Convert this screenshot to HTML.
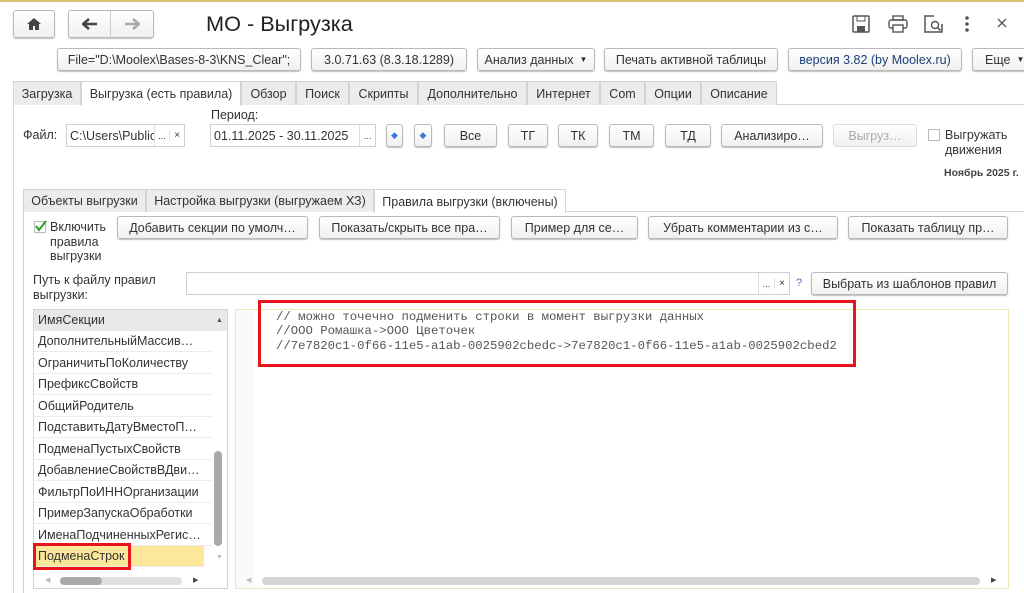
<!DOCTYPE html>
<html><head><meta charset="utf-8"><style>
*{box-sizing:border-box}
body{margin:0;width:1024px;height:593px;overflow:hidden;background:#fff;font-family:"Liberation Sans",sans-serif;font-size:12.5px;color:#333;position:relative}
.a{position:absolute}
.btn{position:absolute;border:1px solid #b9b9b9;border-radius:3px;background:linear-gradient(#fff,#f0f0f0);box-shadow:0 1px 1px rgba(0,0,0,.25);display:flex;align-items:center;justify-content:center;font-size:12.5px;color:#333;white-space:nowrap;overflow:hidden}
.tab{position:absolute;top:81px;height:24px;background:#ececec;border:1px solid #d4d4d4;border-bottom:none;display:flex;align-items:center;justify-content:center;font-size:12.5px}
.inp{position:absolute;border:1px solid #cfcfcf;background:#fff;font-size:12.5px;display:flex;align-items:center;padding-left:3px;overflow:hidden;white-space:nowrap}
.row{position:absolute;left:34px;width:178px;height:21px;border-bottom:1px solid #ececec;padding-left:4px;line-height:21px;font-size:12.5px;white-space:nowrap}
.mono{position:absolute;left:276px;font-family:"Liberation Mono",monospace;font-size:12.3px;color:#555;white-space:pre}
</style></head><body>
<div class="a" style="left:0;top:0;width:1024px;height:2px;background:#d8c37a"></div>
<div class="btn" style="left:13px;top:10px;width:42px;height:28px"><svg width="16" height="14" viewBox="0 0 16 14"><path d="M8 1L1 7h2v6h4V9h2v4h4V7h2z" fill="#444"/></svg></div>
<div class="btn" style="left:68px;top:10px;width:86px;height:28px;justify-content:flex-start"><div style="width:43px;height:100%;border-right:1px solid #ccc;display:flex;align-items:center;justify-content:center"><svg width="16" height="12"><path d="M1 6h14M7 1L1 6l6 5" stroke="#444" stroke-width="2.5" fill="none"/></svg></div><div style="width:43px;display:flex;justify-content:center"><svg width="16" height="12"><path d="M1 6h14M9 1l6 5-6 5" stroke="#aaa" stroke-width="2.5" fill="none"/></svg></div></div>
<div class="a" style="left:206px;top:11px;font-size:21.7px;color:#222">МО - Выгрузка</div>
<svg class="a" style="left:852px;top:15px" width="18" height="18"><rect x="1" y="1" width="16" height="16" rx="1" fill="none" stroke="#555" stroke-width="1.5"/><rect x="5" y="1" width="8" height="5" fill="none" stroke="#555"/><rect x="5" y="11" width="8" height="6" fill="#555"/></svg>
<svg class="a" style="left:888px;top:15px" width="20" height="18"><rect x="5" y="1" width="10" height="4" fill="none" stroke="#555" stroke-width="1.4"/><rect x="1" y="5" width="18" height="8" rx="2" fill="none" stroke="#555" stroke-width="1.4"/><rect x="5" y="10" width="10" height="7" fill="#fff" stroke="#555" stroke-width="1.4"/></svg>
<svg class="a" style="left:924px;top:15px" width="20" height="18"><path d="M10 1H1v16h17V9" fill="none" stroke="#555" stroke-width="1.5"/><circle cx="11" cy="10" r="3.5" fill="none" stroke="#555" stroke-width="1.4"/><path d="M13.5 12.5l3 3" stroke="#555" stroke-width="1.6"/></svg>
<svg class="a" style="left:964px;top:16px" width="6" height="16"><circle cx="3" cy="2" r="1.8" fill="#555"/><circle cx="3" cy="8" r="1.8" fill="#555"/><circle cx="3" cy="14" r="1.8" fill="#555"/></svg>
<svg class="a" style="left:997px;top:18px" width="10" height="10"><path d="M1 1l8 8M9 1l-8 8" stroke="#555" stroke-width="1.3"/></svg>

<div class="btn" style="left:57px;top:48px;width:244px;height:23px">File="D:\Moolex\Bases-8-3\KNS_Clear";</div>
<div class="btn" style="left:311px;top:48px;width:156px;height:23px">3.0.71.63 (8.3.18.1289)</div>
<div class="btn" style="left:477px;top:48px;width:118px;height:23px">Анализ данных <span style="font-size:8px;margin-left:6px">▼</span></div>
<div class="btn" style="left:604px;top:48px;width:174px;height:23px">Печать активной таблицы</div>
<div class="btn" style="left:788px;top:48px;width:174px;height:23px;color:#1c3f7a">версия 3.82 (by Moolex.ru)</div>
<div class="btn" style="left:972px;top:48px;width:60px;height:23px;justify-content:flex-start;padding-left:12px">Еще <span style="font-size:8px;margin-left:6px">▼</span></div>

<div class="a" style="left:13px;top:104px;width:1011px;height:1px;background:#d4d4d4"></div>
<div class="a" style="left:13px;top:104px;width:1px;height:489px;background:#d4d4d4"></div>
<div class="tab" style="left:13px;width:68px">Загрузка</div>
<div class="tab" style="left:81px;width:160px;background:#fff;height:25px">Выгрузка (есть правила)</div>
<div class="tab" style="left:241px;width:55px">Обзор</div>
<div class="tab" style="left:296px;width:53px">Поиск</div>
<div class="tab" style="left:349px;width:69px">Скрипты</div>
<div class="tab" style="left:418px;width:109px">Дополнительно</div>
<div class="tab" style="left:527px;width:73px">Интернет</div>
<div class="tab" style="left:600px;width:45px">Com</div>
<div class="tab" style="left:645px;width:56px">Опции</div>
<div class="tab" style="left:701px;width:76px">Описание</div>

<div class="a" style="left:23px;top:128px">Файл:</div>
<div class="inp" style="left:66px;top:124px;width:119px;height:23px"><span style="width:86px;overflow:hidden">C:\Users\Public</span><span style="border-left:1px solid #ddd;width:16px;height:100%;font-size:9px;display:flex;align-items:center;justify-content:center">...</span><span style="border-left:1px solid #ddd;width:15px;font-size:10px;text-align:center">×</span></div>
<div class="a" style="left:211px;top:108px">Период:</div>
<div class="inp" style="left:210px;top:124px;width:166px;height:23px"><span style="width:147px">01.11.2025 - 30.11.2025</span><span style="border-left:1px solid #ddd;width:16px;height:100%;font-size:9px;display:flex;align-items:center;justify-content:center">...</span></div>
<div class="btn" style="left:386px;top:124px;width:17px;height:23px;color:#3a7bd5;font-size:9px">◆</div>
<div class="btn" style="left:414px;top:124px;width:18px;height:23px;color:#3a7bd5;font-size:9px">◆</div>
<div class="btn" style="left:444px;top:124px;width:53px;height:23px">Все</div>
<div class="btn" style="left:508px;top:124px;width:40px;height:23px">ТГ</div>
<div class="btn" style="left:558px;top:124px;width:40px;height:23px">ТК</div>
<div class="btn" style="left:609px;top:124px;width:45px;height:23px">ТМ</div>
<div class="btn" style="left:665px;top:124px;width:46px;height:23px">ТД</div>
<div class="btn" style="left:721px;top:124px;width:102px;height:23px">Анализиро…</div>
<div class="btn" style="left:833px;top:124px;width:84px;height:23px;color:#aaa;box-shadow:none;border-color:#ddd">Выгруз…</div>
<div class="a" style="left:928px;top:129px;width:12px;height:12px;border:1px solid #bbb;background:#fff"></div>
<div class="a" style="left:945px;top:128px;line-height:15px">Выгружать<br>движения</div>
<div class="a" style="left:944px;top:167px;font-size:10.5px;font-weight:bold;color:#444">Ноябрь 2025 г.</div>

<div class="a" style="left:23px;top:211px;width:1001px;height:1px;background:#d4d4d4"></div>
<div class="a" style="left:23px;top:211px;width:1px;height:382px;background:#d4d4d4"></div>
<div class="tab" style="left:23px;top:189px;width:123px;height:23px">Объекты выгрузки</div>
<div class="tab" style="left:146px;top:189px;width:228px;height:23px">Настройка выгрузки (выгружаем ХЗ)</div>
<div class="tab" style="left:374px;top:189px;width:192px;height:24px;background:#fff">Правила выгрузки (включены)</div>

<div class="a" style="left:34px;top:221px;width:12px;height:12px;border:1px solid #bbb;background:#fff"><svg width="12" height="12" style="position:absolute;left:0;top:-2px"><path d="M1 6l3 4 7-9" stroke="#2c9b2c" stroke-width="2" fill="none"/></svg></div>
<div class="a" style="left:50px;top:220px;line-height:14.5px">Включить<br>правила<br>выгрузки</div>
<div class="btn" style="left:117px;top:216px;width:191px;height:23px">Добавить секции по умолч…</div>
<div class="btn" style="left:319px;top:216px;width:181px;height:23px">Показать/скрыть все пра…</div>
<div class="btn" style="left:511px;top:216px;width:127px;height:23px">Пример для се…</div>
<div class="btn" style="left:648px;top:216px;width:190px;height:23px">Убрать комментарии из с…</div>
<div class="btn" style="left:848px;top:216px;width:160px;height:23px">Показать таблицу пр…</div>

<div class="a" style="left:33px;top:273px;line-height:15px">Путь к файлу правил<br>выгрузки:</div>
<div class="inp" style="left:186px;top:272px;width:604px;height:23px;padding:0"><span style="flex:1"></span><span style="border-left:1px solid #ddd;width:16px;height:100%;font-size:9px;display:flex;align-items:center;justify-content:center">...</span><span style="border-left:1px solid #ddd;width:15px;font-size:10px;text-align:center">×</span></div>
<div class="a" style="left:796px;top:277px;color:#3a7bd5;font-size:11px">?</div>
<div class="btn" style="left:811px;top:272px;width:197px;height:23px">Выбрать из шаблонов правил</div>

<div class="a" style="left:33px;top:309px;width:195px;height:280px;border:1px solid #d4d4d4"></div>
<div class="a" style="left:34px;top:310px;width:178px;height:21px;background:#e8e8e8;padding-left:4px;line-height:21px">ИмяСекции</div>
<div class="a" style="left:212px;top:310px;width:15px;height:21px;background:#e8e8e8;font-size:7px;color:#555;text-align:center;line-height:21px">▲</div>
<div class="row" style="top:331px">ДополнительныйМассив…</div>
<div class="row" style="top:353px">ОграничитьПоКоличеству</div>
<div class="row" style="top:374px">ПрефиксСвойств</div>
<div class="row" style="top:396px">ОбщийРодитель</div>
<div class="row" style="top:417px">ПодставитьДатуВместоП…</div>
<div class="row" style="top:439px">ПодменаПустыхСвойств</div>
<div class="row" style="top:460px">ДобавлениеСвойствВДви…</div>
<div class="row" style="top:482px">ФильтрПоИННОрганизации</div>
<div class="row" style="top:503px">ПримерЗапускаОбработки</div>
<div class="row" style="top:525px">ИменаПодчиненныхРегис…</div>
<div class="row" style="top:546px;background:#fce79a;width:170px">ПодменаСтрок</div>
<div class="a" style="left:214px;top:451px;width:8px;height:95px;border-radius:4px;background:#a9a9a9"></div>
<div class="a" style="left:216px;top:554px;font-size:7px;color:#bbb">▼</div>
<div class="a" style="left:45px;top:576px;font-size:7px;color:#bbb">◀</div>
<div class="a" style="left:60px;top:577px;width:122px;height:8px;border-radius:4px;background:#e0e0e0"></div>
<div class="a" style="left:60px;top:577px;width:42px;height:8px;border-radius:4px;background:#a9a9a9"></div>
<div class="a" style="left:193px;top:576px;font-size:7px;color:#444">▶</div>
<div class="a" style="left:33px;top:543px;width:98px;height:27px;border:3px solid #e8141b"></div>

<div class="a" style="left:235px;top:309px;width:774px;height:280px;border:1px solid #efe6b8;background:#fff"></div>
<div class="a" style="left:236px;top:310px;width:18px;height:278px;background:#fafafa"></div>
<div class="mono" style="top:310px">// можно точечно подменить строки в момент выгрузки данных</div>
<div class="mono" style="top:324px">//ООО Ромашка-&gt;ООО Цветочек</div>
<div class="mono" style="top:339px">//7e7820c1-0f66-11e5-a1ab-0025902cbedc-&gt;7e7820c1-0f66-11e5-a1ab-0025902cbed2</div>
<div class="a" style="left:258px;top:300px;width:598px;height:67px;border:3px solid #e8141b"></div>
<div class="a" style="left:246px;top:576px;font-size:7px;color:#bbb">◀</div>
<div class="a" style="left:262px;top:577px;width:718px;height:8px;border-radius:4px;background:#d4d4d4"></div>
<div class="a" style="left:991px;top:576px;font-size:7px;color:#444">▶</div>
</body></html>
